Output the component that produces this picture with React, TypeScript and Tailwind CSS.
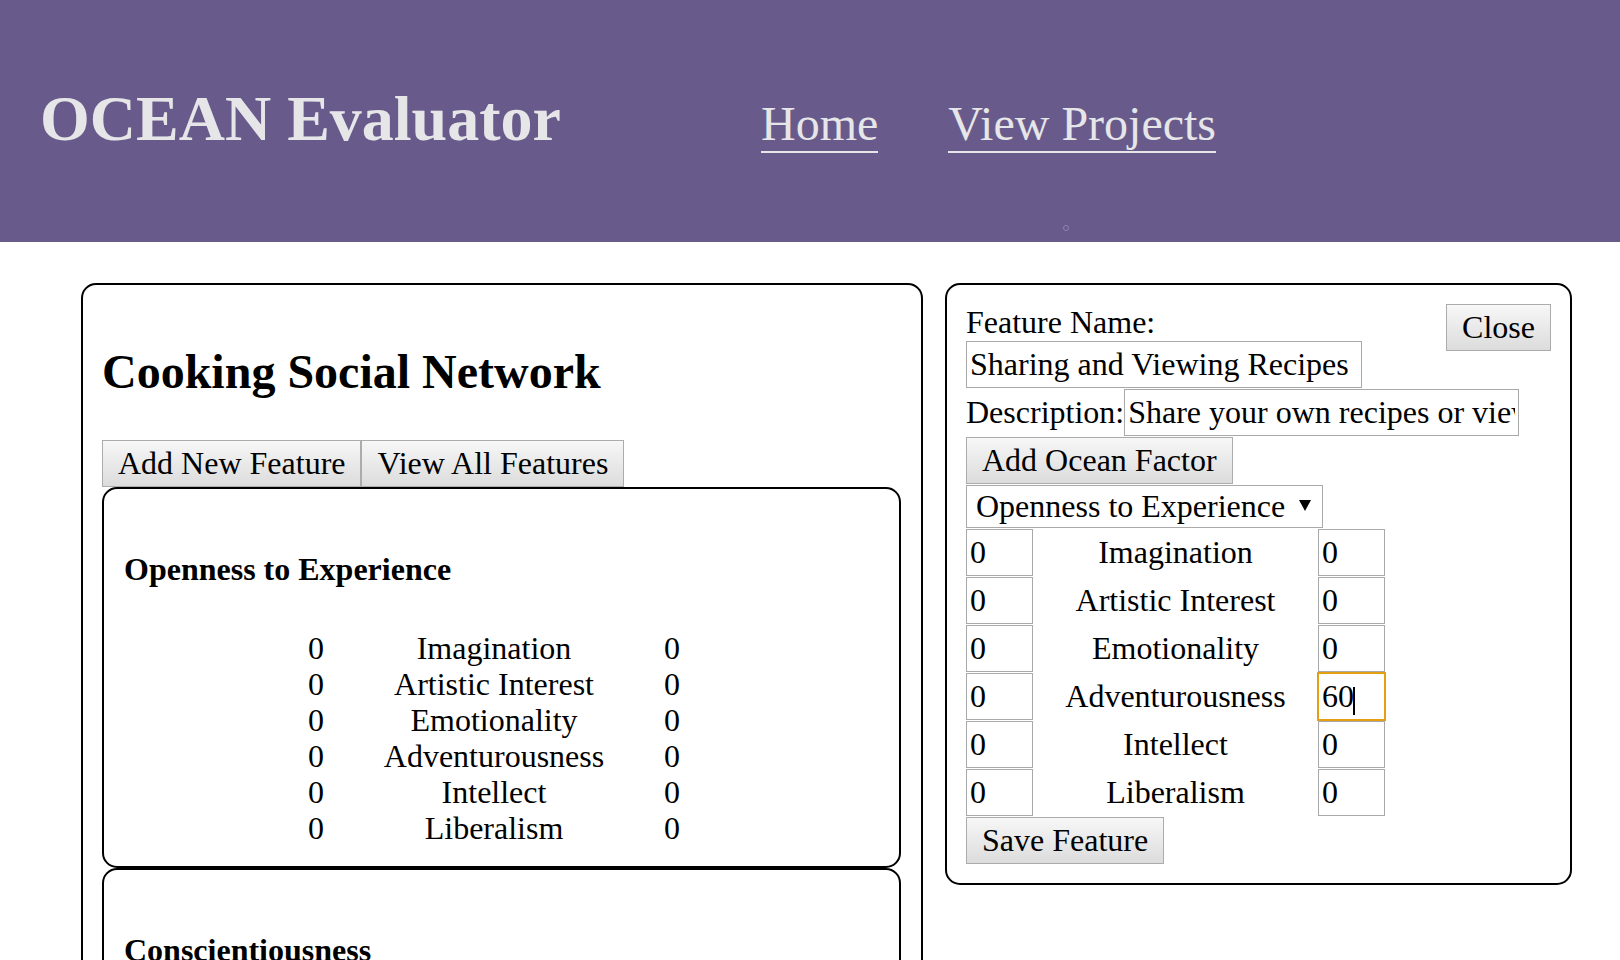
import React from 'react';

const facets: Record<string, string[]> = {
  'Openness to Experience': ['Imagination', 'Artistic Interest', 'Emotionality', 'Adventurousness', 'Intellect', 'Liberalism'],
  Conscientiousness: ['Self-Efficacy', 'Orderliness', 'Dutifulness', 'Achievement-Striving', 'Self-Discipline', 'Cautiousness'],
};

const btn =
  'border border-[#acacac] bg-gradient-to-b from-[#f7f7f7] to-[#dcdcdc] px-[15px] py-[4px] text-[32px] leading-[37px] text-black';

const field = 'h-[47px] border border-[#a9a9a9] bg-white px-[3px] text-[32px] leading-[37px] text-black outline-none';

const FactorCard: React.FC<{ name: string }> = ({ name }) => (
  <div className="rounded-[15px] border-2 border-black px-[20px] pt-[20px] pb-[20px]">
    <h3 className="mt-[42px] mb-[42px] text-[32px] leading-[37px] font-bold">{name}</h3>
    <div className="ml-[142px] grid grid-cols-[100px_256px_100px] text-center text-[32px] leading-[36px]">
      {facets[name].map(f => (
        <React.Fragment key={f}>
          <span>0</span>
          <span>{f}</span>
          <span>0</span>
        </React.Fragment>
      ))}
    </div>
  </div>
);

export default function App() {
  const rightValues: Record<string, string> = { Adventurousness: '60' };

  return (
    <div className="min-h-screen bg-white font-['Liberation_Serif','Times_New_Roman',serif] text-black">
      <header className="relative flex h-[242px] items-baseline bg-[#685b8b] pl-[40px] pt-[82px] text-[#e6e6e8]">
        <h1 className="w-[721px] text-[64px] leading-[74px] font-bold">OCEAN Evaluator</h1>
        <nav className="flex items-baseline gap-[70px]">
          <a href="#" className="inline-block border-b-2 border-[#e6e6e8] text-[48px] leading-[55px]">Home</a>
          <a href="#" className="inline-block border-b-2 border-[#e6e6e8] text-[48px] leading-[55px]">View Projects</a>
        </nav>
        <span className="absolute left-[1063px] top-[225px] h-[6px] w-[6px] rounded-full border border-[#8e84ad]" />
      </header>

      <main className="flex items-start gap-[22px] pl-[81px] pt-[41px]">
        <section className="w-[842px] rounded-[15px] border-2 border-black pt-[19px] pr-[20px] pb-[19px] pl-[19px]">
          <h2 className="mt-[40px] mb-[41px] text-[48px] leading-[55px] font-bold">Cooking Social Network</h2>
          <div className="flex">
            <button className={btn}>Add New Feature</button>
            <button className={btn}>View All Features</button>
          </div>
          {Object.keys(facets).map(name => (
            <FactorCard key={name} name={name} />
          ))}
        </section>

        <section className="w-[627px] rounded-[15px] border-2 border-black px-[19px] pt-[19px] pb-[19px]">
          <button className={`${btn} float-right`}>Close</button>
          <label className="block text-[32px] leading-[37px]">Feature Name:</label>
          <input className={`${field} block w-[396px]`} defaultValue="Sharing and Viewing Recipes" />
          <div className="mt-[1px] flex items-center">
            <label className="text-[32px] leading-[37px]">Description:</label>
            <input className={`${field} w-[395px]`} defaultValue="Share your own recipes or view recipes from others" />
          </div>
          <button className={`${btn} mt-[1px] block`}>Add Ocean Factor</button>
          <div className="relative mt-[1px] w-[357px]">
            <select className="h-[43px] w-full appearance-none border border-[#a9a9a9] bg-white pl-[9px] text-[32px] leading-[37px] text-black outline-none">
              <option>Openness to Experience</option>
              <option>Conscientiousness</option>
              <option>Extraversion</option>
              <option>Agreeableness</option>
              <option>Neuroticism</option>
            </select>
            <svg className="pointer-events-none absolute right-[12px] top-[15px]" width="12" height="11" viewBox="0 0 12 11">
              <path d="M0 0h12L6 11z" fill="#000" />
            </svg>
          </div>
          <div className="mt-[1px] grid grid-cols-[67px_285px_67px] gap-y-[1px]">
            {facets['Openness to Experience'].map(f => (
              <React.Fragment key={f}>
                <input className={`${field} w-full`} defaultValue="0" />
                <span className="flex h-[47px] items-center justify-center text-[32px] leading-[37px]">{f}</span>
                {rightValues[f] ? (
                  <div className="relative">
                    <input
                      className={`${field} w-full outline-2 outline-solid outline-offset-[-1px] outline-[#e59f13]`}
                      defaultValue={rightValues[f]}
                    />
                    <span className="pointer-events-none absolute left-[35px] top-[14px] h-[28px] w-[2px] bg-black" />
                  </div>
                ) : (
                  <input className={`${field} w-full`} defaultValue="0" />
                )}
              </React.Fragment>
            ))}
          </div>
          <button className={`${btn} mt-[1px] block`}>Save Feature</button>
        </section>
      </main>
    </div>
  );
}
